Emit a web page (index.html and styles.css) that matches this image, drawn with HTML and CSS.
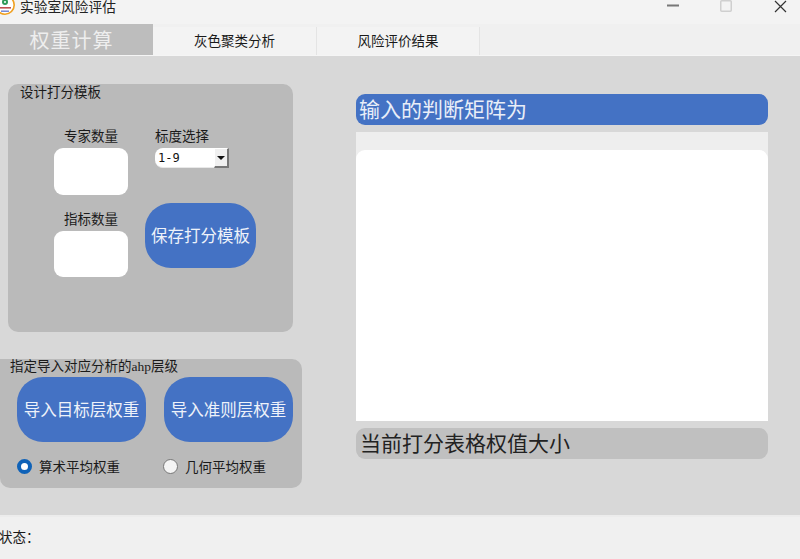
FILE: index.html
```html
<!DOCTYPE html>
<html lang="zh">
<head>
<meta charset="utf-8">
<title>实验室风险评估</title>
<link rel="stylesheet" href="styles.css">
</head>
<body>
<div class="app">
  <header class="titlebar">
    <div class="title-left">
      <svg class="logo" width="16" height="16" viewBox="0 0 16 16"><circle cx="5" cy="5" r="9.2" fill="#fff" stroke="#f0a020" stroke-width="1.6"/><circle cx="5" cy="2" r="3" fill="#2f9a58"/><circle cx="5" cy="2" r="1" fill="#fff"/><rect x="0" y="7" width="11" height="1.6" fill="#c05050"/><rect x="1" y="10.5" width="8" height="1.4" fill="#6a7fd0"/></svg>
      <span class="title-text">实验室风险评估</span>
    </div>
    <div class="win-controls">
      <svg class="win-btn" width="12" height="12" viewBox="0 0 12 12"><rect x="0" y="4.5" width="12" height="2" fill="#777"/></svg>
      <svg class="win-btn win-max" width="12" height="12" viewBox="0 0 12 12"><rect x="0.75" y="0.75" width="10.5" height="10.5" rx="1" fill="none" stroke="#cfcfcf" stroke-width="1.5"/></svg>
      <svg class="win-btn win-close" width="13" height="13" viewBox="0 0 13 13"><path d="M1 1 12 12M12 1 1 12" stroke="#333" stroke-width="1.2" fill="none"/></svg>
    </div>
  </header>
  <nav class="tabs">
    <div class="tab tab-active">权重计算</div>
    <div class="tab tab-one">灰色聚类分析</div>
    <div class="tab tab-two">风险评价结果</div>
  </nav>
  <main class="content">
    <div class="left">
      <section class="panel panel-design">
        <div class="legend">设计打分模板</div>
        <div class="design-grid">
          <div class="field">
            <label class="field-label">专家数量</label>
            <div class="input-box"></div>
          </div>
          <div class="field field-scale">
            <label class="field-label">标度选择</label>
            <div class="select-box"><span class="select-val">1-9</span><span class="select-arrow"><svg width="8" height="4" viewBox="0 0 8 4"><path d="M0 0H8L4 4Z" fill="#111"/></svg></span></div>
          </div>
          <div class="field field-second">
            <label class="field-label">指标数量</label>
            <div class="input-box input-second"></div>
          </div>
          <button class="btn btn-save">保存打分模板</button>
        </div>
      </section>
      <section class="panel panel-import">
        <div class="legend legend-import">指定导入对应分析的<span class="latin">ahp</span>层级</div>
        <div class="import-row">
          <button class="btn btn-import">导入目标层权重</button>
          <button class="btn btn-import">导入准则层权重</button>
        </div>
        <div class="radio-row">
          <div class="radio-item"><span class="radio radio-on"></span>算术平均权重</div>
          <div class="radio-item"><span class="radio"></span>几何平均权重</div>
        </div>
      </section>
    </div>
    <div class="right">
      <div class="bar bar-blue">输入的判断矩阵为</div>
      <div class="matrix"><div class="matrix-white"></div></div>
      <div class="bar bar-gray">当前打分表格权值大小</div>
    </div>
  </main>
  <footer class="status">状态：</footer>
</div>
</body>
</html>
```
FILE: styles.css
```css
* { box-sizing: border-box; }
html, body { margin: 0; padding: 0; }
body { width: 800px; height: 559px; overflow: hidden; font-family: "Noto Sans CJK SC", "Liberation Sans", sans-serif; color: #111; }
.app { width: 800px; height: 559px; display: flex; flex-direction: column; background: #f0f0f0; }

.titlebar { height: 24px; background: #f3f3f3; display: flex; justify-content: space-between; }
.title-left { display: flex; align-items: flex-start; }
.logo { display: block; flex: none; }
.title-text { font-size: 13.7px; line-height: 13px; margin-left: 4px; color: #222; }
.win-controls { display: flex; align-items: flex-start; }
.win-btn { display: block; }
.win-controls .win-btn:first-child { margin-right: 41px; }
.win-max { margin-right: 42px; }
.win-close { margin-right: 13px; }

.tabs { height: 32px; display: flex; background: #f0f0f0; border-bottom: 1px solid #f5f5f5; align-items: flex-start; }
.tab { font-size: 13.5px; text-align: center; color: #1a1a1a; }
.tab-active { width: 153px; height: 31px; background: #bdbdbd; color: #eeeeee; font-size: 20px; letter-spacing: 1px; line-height: 31px; padding-right: 10px; }
.tab-one { width: 164px; background: #f3f3f3; border-right: 1px solid #e4e4e4; margin-top: 3px; height: 28px; line-height: 26px; }
.tab-two { width: 163px; background: #f3f3f3; border-right: 1px solid #e4e4e4; margin-top: 3px; height: 28px; line-height: 26px; }

.content { height: 461px; background: #d8d8d8; display: flex; border-bottom: 2px solid #ececec; }
.left { width: 356px; flex: none; display: flex; flex-direction: column; }
.panel { background: #bababa; font-size: 13.5px; }
.panel-design { margin: 28px 0 0 8px; width: 285px; height: 248px; border-radius: 10px; padding: 0 0 0 12px; }
.legend { font-size: 13.5px; line-height: 14px; color: #1a1a1a; }
.design-grid { display: grid; grid-template-columns: 74px 111px; column-gap: 17px; margin: 26px 0 0 34px; grid-template-rows: 79px auto; }
.field { display: flex; flex-direction: column; }
.field-label { font-size: 13.5px; line-height: 22px; height: 24px; text-align: center; color: #1a1a1a; white-space: nowrap; }
.field-scale { margin-left: 10px; width: 74px; }
.field-scale .field-label { text-align: left; }
.input-box { width: 74px; height: 47px; background: #fff; border-radius: 9px; }
.input-second { height: 46px; }
.field-second { margin-top: 4px; }
.select-box { width: 74px; height: 20px; background: #fff; border-radius: 8px 0 0 8px; display: flex; justify-content: space-between; border-bottom: 1px solid #e8e8e8; }
.select-val { font-family: "DejaVu Sans Mono", monospace; font-size: 12px; line-height: 21px; margin-left: 3px; }
.select-arrow { width: 15px; height: 20px; background: #f0f0f0; border-right: 2px solid #777; border-bottom: 2px solid #777; border-left: 1px solid #fff; border-top: 1px solid #fff; display: flex; align-items: center; justify-content: center; }
.select-arrow svg { display: block; }
.btn { border: none; background: #4472c4; color: #eef2fa; font-family: inherit; padding: 0 0 1px; display: block; text-align: center; white-space: nowrap; }
.btn-save { width: 111px; height: 65px; border-radius: 26px; font-size: 16.5px; }

.panel-import { margin: 27px 0 0 0; width: 302px; height: 129px; border-radius: 0 10px 10px 10px; }
.legend-import { padding: 0 0 0 10px; height: 14px; line-height: 12px; }
.latin { font-family: "Liberation Serif", serif; }
.import-row { display: flex; gap: 18px; margin: 4px 0 0 17px; }
.btn-import { width: 129px; height: 65px; border-radius: 26px; font-size: 16.5px; padding-bottom: 1px; flex: none; }
.radio-row { display: flex; margin: 15px 0 0 17px; }
.radio-item { width: 146px; flex: none; display: flex; align-items: center; font-size: 13.5px; line-height: 18px; color: #1a1a1a; }
.radio { width: 15px; height: 15px; border-radius: 50%; background: #f4f4f4; border: 1px solid #777; margin-right: 7px; flex: none; }
.radio-on { background: #fff; border: 4px solid #0f62b8; }

.right { width: 412px; flex: none; display: flex; flex-direction: column; padding-top: 38px; }
.bar { height: 31px; border-radius: 9px; font-size: 21px; line-height: 28px; padding-left: 3px; flex: none; }
.bar-blue { background: #4472c4; color: #e9eef8; }
.matrix { height: 289px; margin: 7px 0; background: #eeeeee; padding-top: 18px; flex: none; }
.matrix-white { height: 271px; background: #fff; border-radius: 9px 9px 0 0; }
.bar-gray { background: #c0c0c0; color: #222; padding-left: 4px; }

.status { flex: 1; background: #f0f0f0; font-size: 13.5px; line-height: 18px; padding-top: 10px; text-indent: -1px; color: #1a1a1a; }
```
